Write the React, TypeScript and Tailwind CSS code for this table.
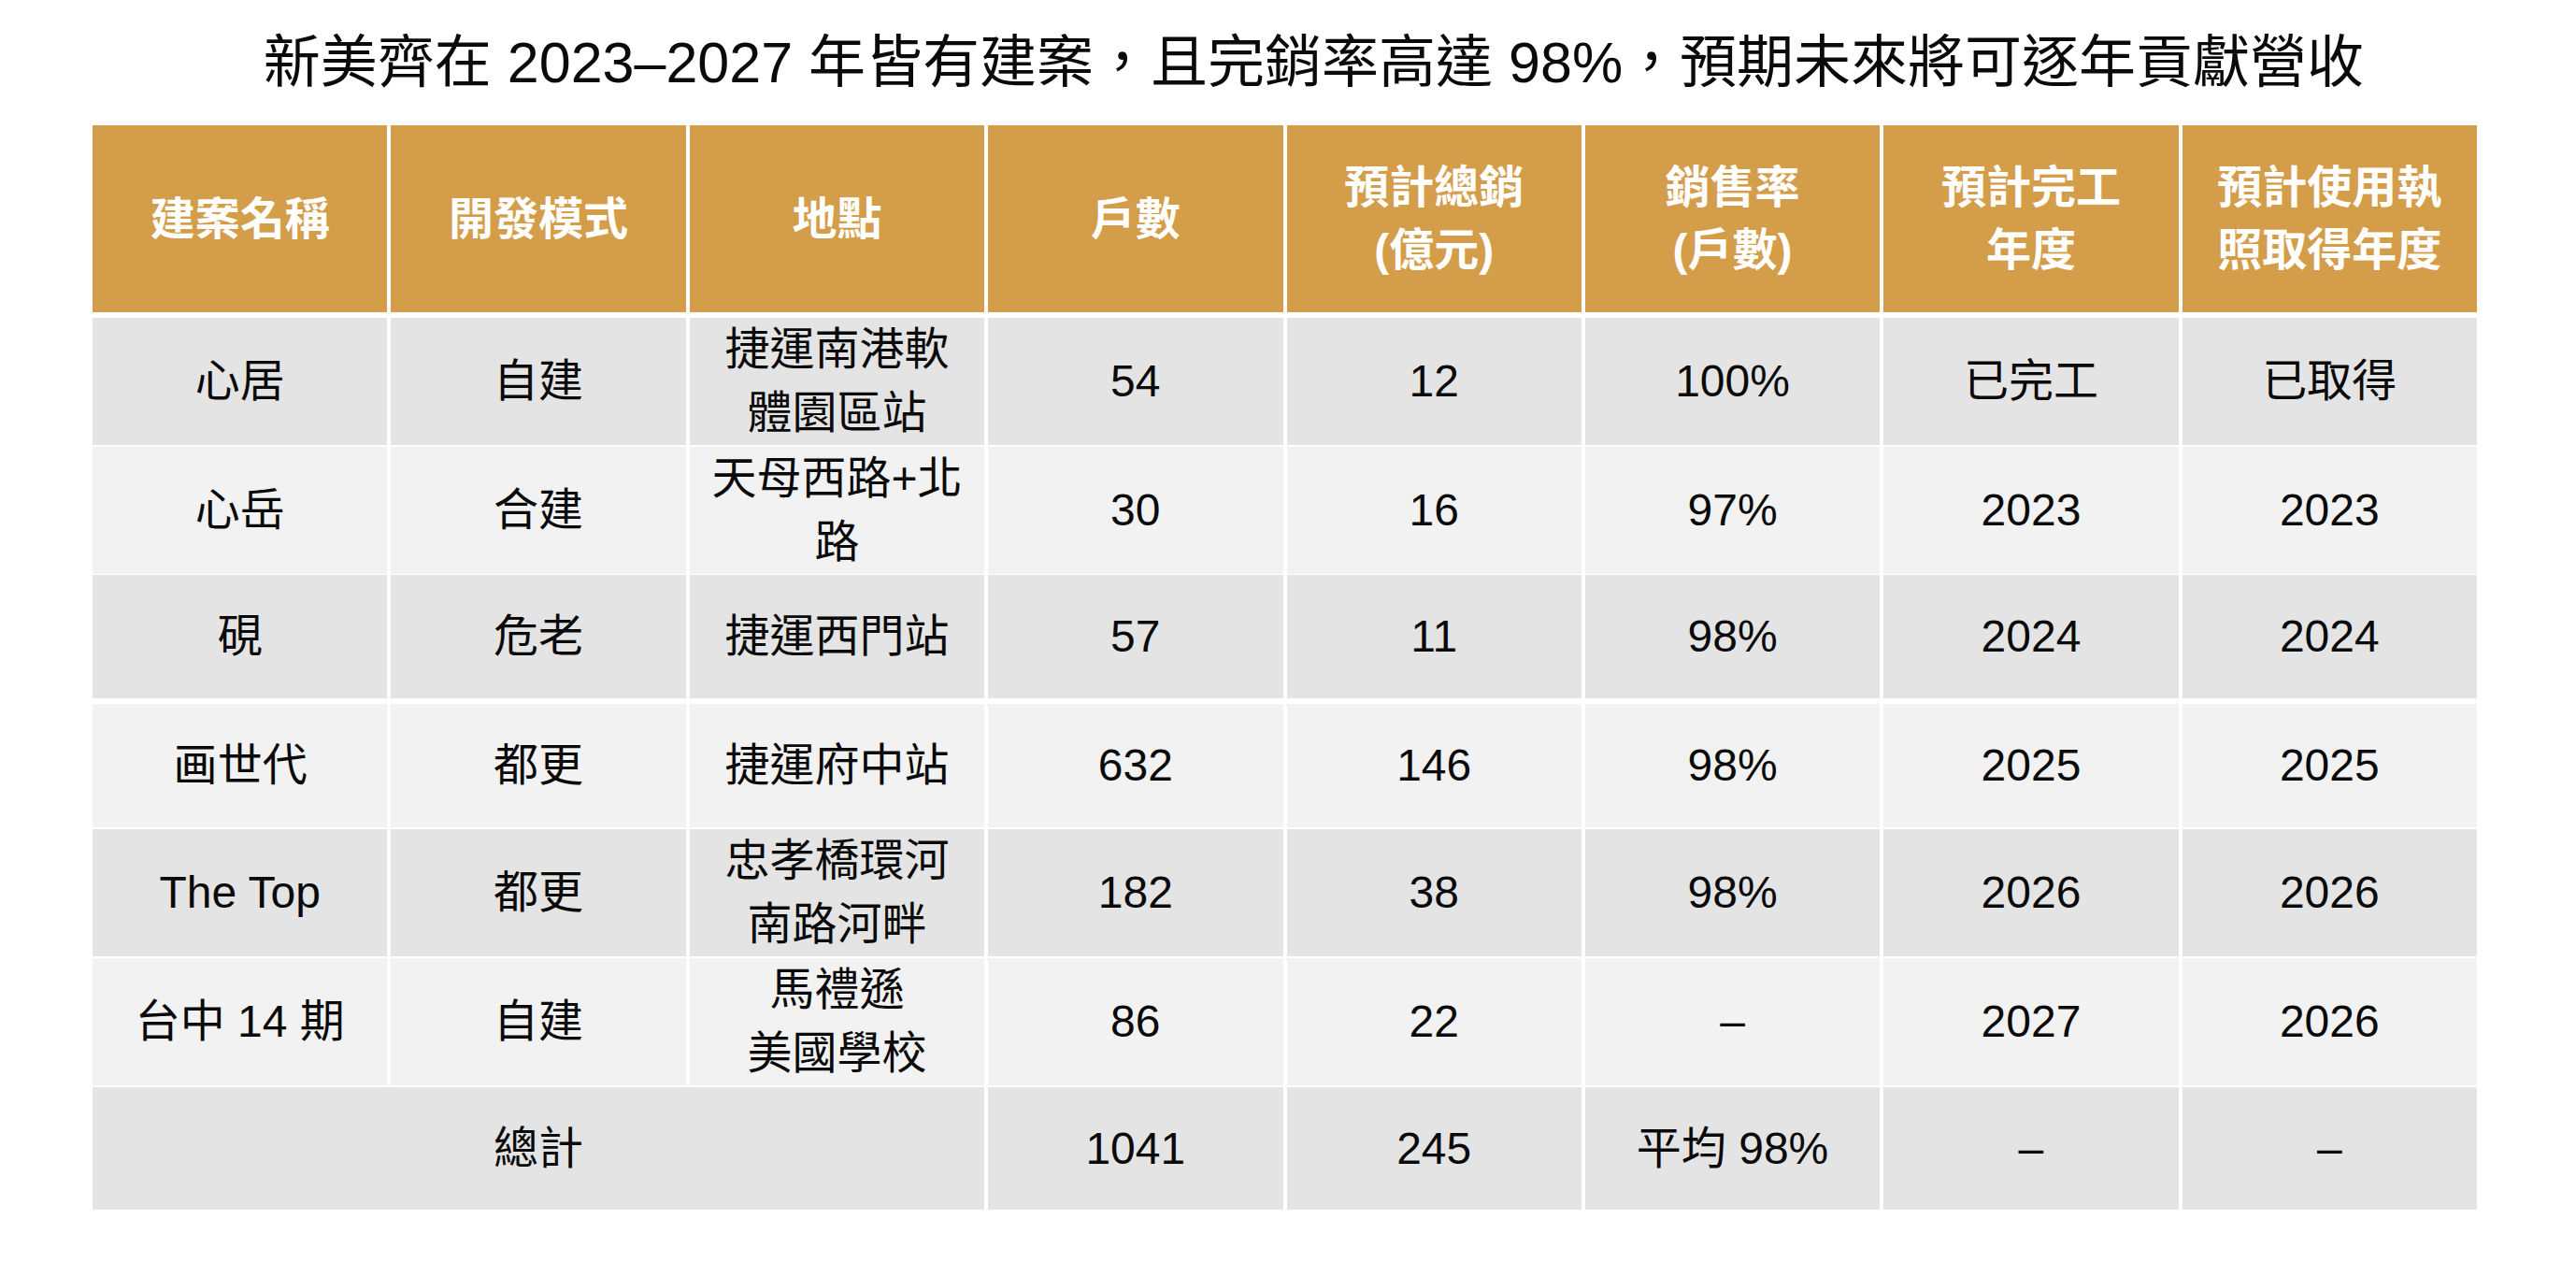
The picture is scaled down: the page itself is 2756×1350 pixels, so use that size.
import React from 'react';

type Cell = React.ReactNode;

const headers: Cell[] = [
  '建案名稱',
  '開發模式',
  '地點',
  '戶數',
  <>預計總銷<br />(億元)</>,
  <>銷售率<br />(戶數)</>,
  <>預計完工<br />年度</>,
  <>預計使用執<br />照取得年度</>,
];

const rows: { cells: Cell[]; dark: boolean; gap: string; h: string }[] = [
  { cells: ['心居', '自建', <>捷運南港軟<br />體園區站</>, '54', '12', '100%', '已完工', '已取得'], dark: true, gap: 'mt-[6px]', h: 'h-[132px]' },
  { cells: ['心岳', '合建', <>天母西路+北<br />路</>, '30', '16', '97%', '2023', '2023'], dark: false, gap: 'mt-[6px]', h: 'h-[131px]' },
  { cells: ['硯', '危老', '捷運西門站', '57', '11', '98%', '2024', '2024'], dark: true, gap: 'mt-[6px]', h: 'h-[132px]' },
  { cells: ['画世代', '都更', '捷運府中站', '632', '146', '98%', '2025', '2025'], dark: false, gap: 'mt-[6px]', h: 'h-[132px]' },
  { cells: ['The Top', '都更', <>忠孝橋環河<br />南路河畔</>, '182', '38', '98%', '2026', '2026'], dark: true, gap: 'mt-[2px]', h: 'h-[131px]' },
  { cells: ['台中 14 期', '自建', <>馬禮遜<br />美國學校</>, '86', '22', '–', '2027', '2026'], dark: false, gap: 'mt-[7px]', h: 'h-[132px]' },
];

const font = { fontFamily: '"Liberation Sans", "Noto Sans CJK TC", sans-serif' };

export default function App() {
  return (
    <div className="w-[2756px] h-[1350px] bg-white text-[#0a0a0a]" style={font}>
      <div className="h-[134px] flex items-center justify-center pl-[55px]">
        <h1 className="text-[61px] font-normal leading-none tracking-normal">
          新美齊在 2023–2027 年皆有建案，且完銷率高達 98%，預期未來將可逐年貢獻營收
        </h1>
      </div>

      <div className="ml-[99px] w-[2551px] flex flex-col">
        {/* header */}
        <div className="grid grid-cols-8 gap-x-[4px] h-[200px]">
          {headers.map((h, i) => (
            <div
              key={i}
              className="bg-[#d49d4a] text-white font-bold text-[48px] leading-[67px] flex items-center justify-center text-center"
            >
              <div>{h}</div>
            </div>
          ))}
        </div>

        {rows.map((r, ri) => (
          <div key={ri} className={`grid grid-cols-8 gap-x-[4px] ${r.gap} ${r.h}`}>
            {r.cells.map((c, ci) => (
              <div
                key={ci}
                className={`${r.dark ? 'bg-[#e4e4e4]' : 'bg-[#f2f2f2]'} text-[48px] leading-[68px] flex items-center justify-center text-center`}
              >
                <div>{c}</div>
              </div>
            ))}
          </div>
        ))}

        {/* total */}
        <div className="grid grid-cols-8 gap-x-[4px] mt-[6px] h-[131px]">
          <div className="col-span-3 bg-[#e4e4e4] text-[48px] flex items-center justify-center">總計</div>
          <div className="bg-[#e4e4e4] text-[48px] flex items-center justify-center">1041</div>
          <div className="bg-[#e4e4e4] text-[48px] flex items-center justify-center">245</div>
          <div className="bg-[#e4e4e4] text-[48px] flex items-center justify-center">平均 98%</div>
          <div className="bg-[#e4e4e4] text-[48px] flex items-center justify-center">–</div>
          <div className="bg-[#e4e4e4] text-[48px] flex items-center justify-center">–</div>
        </div>
      </div>
    </div>
  );
}
